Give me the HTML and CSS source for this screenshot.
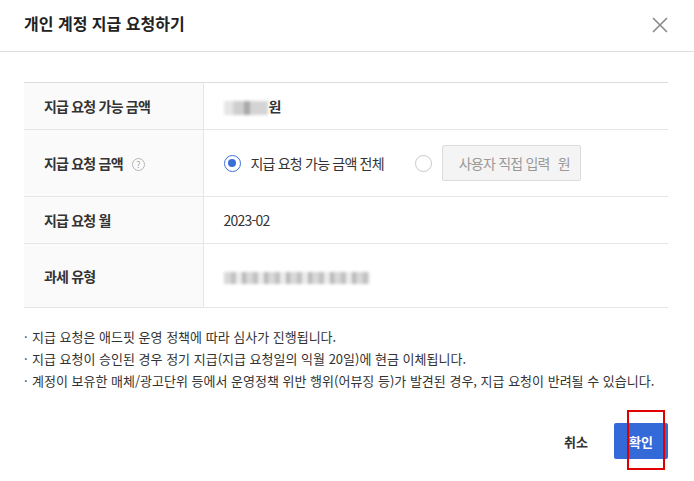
FILE: index.html
```html
<!DOCTYPE html>
<html lang="ko">
<head>
    <meta charset="UTF-8">
    <meta name="viewport" content="width=device-width, initial-scale=1.0">
    <title>개인 계정 지급 요청하기</title>
    <link rel="stylesheet" href="styles.css">
</head>
<body>

<div class="modal">
    <div class="modal-header">
        <h2>개인 계정 지급 요청하기</h2>
        <button class="close" type="button" aria-label="닫기">
            <svg width="16" height="16" viewBox="0 0 16 16"><path d="M1 1L15 15M15 1L1 15" stroke="#8a8a8a" stroke-width="1.6" fill="none"/></svg>
        </button>
    </div>

    <div class="modal-body">
        <table class="form-table">
            <tr class="row-short">
                <th>지급 요청 가능 금액</th>
                <td><span class="blur blur-amount"></span><strong>원</strong></td>
            </tr>
            <tr class="row-tall">
                <th>지급 요청 금액 <span class="help">?</span></th>
                <td>
                    <div class="choice">
                        <label class="radio checked"><span class="dot"></span>지급 요청 가능 금액 전체</label>
                        <label class="radio"><span class="dot"></span></label>
                        <div class="amount-input">
                            <span class="placeholder">사용자 직접 입력</span>
                            <span class="unit">원</span>
                        </div>
                    </div>
                </td>
            </tr>
            <tr class="row-short">
                <th>지급 요청 월</th>
                <td>2023-02</td>
            </tr>
            <tr class="row-tax">
                <th>과세 유형</th>
                <td><span class="blur blur-tax"></span></td>
            </tr>
        </table>

        <ul class="notes">
            <li>지급 요청은 애드핏 운영 정책에 따라 심사가 진행됩니다.</li>
            <li>지급 요청이 승인된 경우 정기 지급(지급 요청일의 익월 20일)에 현금 이체됩니다.</li>
            <li>계정이 보유한 매체/광고단위 등에서 운영정책 위반 행위(어뷰징 등)가 발견된 경우, 지급 요청이 반려될 수 있습니다.</li>
        </ul>

        <div class="actions">
            <button class="btn-cancel" type="button">취소</button>
            <button class="btn-ok" type="button">확인<span class="mark"></span></button>
        </div>
    </div>
</div>

</body>
</html>
```

FILE: styles.css
```css
body {
    margin: 0;
    padding: 0;
    background: #fff;
    font-family: "Noto Sans CJK KR", "Noto Sans", sans-serif;
    color: #333;
}
.modal {
    width: 694px;
    height: 481px;
    background: #fff;
}
.modal-header {
    height: 52px;
    border-bottom: 1px solid #dedede;
    display: flex;
    align-items: center;
    justify-content: space-between;
    padding: 0 26px 6px 24px;
    box-sizing: border-box;
}
.modal-header h2 {
    margin: 0;
    font-size: 16px;
    font-weight: bold;
    color: #222;
}
.close {
    border: 0;
    background: none;
    padding: 0;
    width: 16px;
    height: 16px;
    cursor: pointer;
    margin-top: 4px;
}
.close svg {
    display: block;
}
.modal-body {
    padding: 30px 26px 0 24px;
}
.form-table {
    width: 100%;
    border-collapse: collapse;
    border-top: 1px solid #dcdcdc;
    border-bottom: 1px solid #d6d6d6;
    font-size: 14px;
    letter-spacing: -0.8px;
}
.form-table th,
.form-table td {
    border-bottom: 1px solid #e6e6e6;
    text-align: left;
    padding: 0;
}
.form-table th {
    width: 179px;
    background: #fafafa;
    border-right: 1px solid #e6e6e6;
    padding-left: 20px;
    box-sizing: border-box;
    font-weight: bold;
    color: #333;
}
.form-table td {
    padding-left: 20px;
    color: #333;
}
.row-short th,
.row-short td {
    height: 46px;
}
.row-tall th,
.row-tall td {
    height: 66px;
}
.row-tax th,
.row-tax td {
    height: 63px;
}
.help {
    display: inline-block;
    width: 11px;
    height: 11px;
    border: 1px solid #b5b5b5;
    border-radius: 50%;
    color: #aaa;
    font-size: 9px;
    line-height: 11px;
    text-align: center;
    font-weight: normal;
    letter-spacing: 0;
    margin-left: 6px;
    vertical-align: 1px;
}
.blur {
    display: inline-block;
    vertical-align: middle;
    background: linear-gradient(90deg, #e6e6e6 0 20%, #cfcfcf 20% 45%, #a9a9a9 45% 60%, #d4d4d4 60% 100%);
    filter: blur(1.5px);
}
.blur-amount {
    width: 44px;
    height: 14px;
    margin-right: 1px;
}
.blur-tax {
    width: 146px;
    height: 12px;
    background: repeating-linear-gradient(90deg, #d8d8d8 0 7px, #c0c0c0 7px 12px, #ececec 12px 18px, #b8b8b8 18px 22px);
}
.choice {
    display: flex;
    align-items: center;
}
.radio {
    display: flex;
    align-items: center;
    color: #333;
}
.dot {
    width: 15px;
    height: 15px;
    border: 1px solid #c8c8c8;
    border-radius: 50%;
    box-sizing: content-box;
    position: relative;
    margin-right: 10px;
}
.radio.checked .dot {
    border-color: #3a6fd8;
}
.radio.checked .dot::after {
    content: "";
    position: absolute;
    left: 3.5px;
    top: 3.5px;
    width: 8px;
    height: 8px;
    border-radius: 50%;
    background: #3a6fd8;
}
.radio + .radio {
    margin-left: 31px;
}
.amount-input {
    width: 139px;
    height: 36px;
    box-sizing: border-box;
    border: 1px solid #dcdcdc;
    border-radius: 2px;
    background: #f4f4f4;
    display: flex;
    align-items: center;
    justify-content: space-between;
    padding: 0 10px 0 16px;
    color: #999;
    font-size: 14px;
}
.notes {
    list-style: none;
    margin: 18px 0 0;
    padding: 0;
    font-size: 13px;
    line-height: 22px;
    color: #333;
}
.notes li::before {
    content: "·";
    display: inline-block;
    width: 8px;
}
.actions {
    display: flex;
    justify-content: flex-end;
    align-items: center;
    margin-top: 31px;
}
.actions button {
    font-family: inherit;
    font-size: 13px;
    font-weight: bold;
    border: 0;
    cursor: pointer;
}
.btn-cancel {
    background: none;
    color: #333;
    padding: 0;
    margin-right: 26px;
}
.btn-ok {
    position: relative;
    width: 54px;
    height: 36px;
    background: #3469d8;
    color: #fff;
    border-radius: 2px;
}
.btn-ok .mark {
    position: absolute;
    left: 13px;
    top: -13px;
    width: 34px;
    height: 56px;
    border: 2px solid #e00000;
}
```
